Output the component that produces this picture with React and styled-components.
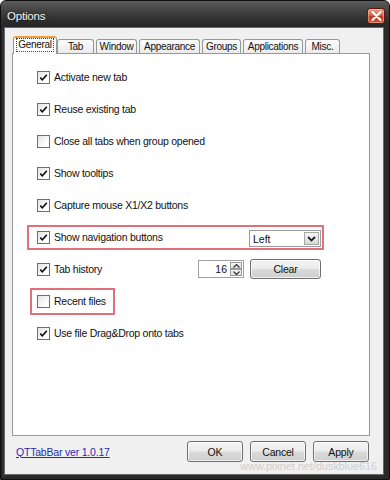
import React from 'react';
import styled, { createGlobalStyle } from 'styled-components';

const Global = createGlobalStyle`
    body {
        margin: 0;
        background: #ffffff;
        font-family: "Liberation Sans", Arial, sans-serif;
    }
`

const tabs = [
    { label: 'General', w: 44, on: true },
    { label: 'Tab', w: 37 },
    { label: 'Window', w: 41 },
    { label: 'Appearance', w: 61 },
    { label: 'Groups', w: 39 },
    { label: 'Applications', w: 60 },
    { label: 'Misc.', w: 35 },
];

const Check = ({ on }) => (
    <Box>
        {on && (
            <svg width="11" height="11" viewBox="0 0 11 11">
                <path d="M2.2 5.6 L4.4 7.8 L8.8 2.8" fill="none" stroke="#111" strokeWidth="1.6" />
            </svg>
        )}
    </Box>
);

const Option = ({ on, text }) => (
    <Row>
        <Line>
            <Check on={on} />
            <Label>{text}</Label>
        </Line>
    </Row>
);

class App extends React.Component {
    render() {
        return (
            <Frame>
                <Global />
                <TitleBar>
                    <Title>Options</Title>
                    <Close>
                        <svg width="11" height="10" viewBox="0 0 11 10">
                            <path d="M1.5 1 L9.5 9 M9.5 1 L1.5 9" stroke="#fff" strokeWidth="2.2" strokeLinecap="round" />
                        </svg>
                    </Close>
                </TitleBar>
                <Client>
                    <TabStrip>
                        {tabs.map(t => (
                            <TabItem key={t.label} $on={t.on} $w={t.w}>
                                {t.on ? <Focus>{t.label}</Focus> : t.label}
                            </TabItem>
                        ))}
                    </TabStrip>
                    <Panel>
                        <Option on text="Activate new tab" />
                        <Option on text="Reuse existing tab" />
                        <Option text="Close all tabs when group opened" />
                        <Option on text="Show tooltips" />
                        <Option on text="Capture mouse X1/X2 buttons" />
                        <Row>
                            <Line $mark $w={297} $h={25}>
                                <Check on />
                                <Label>Show navigation buttons</Label>
                                <Select>
                                    <SelectText>Left</SelectText>
                                    <SelectArrow>
                                        <svg width="9" height="6" viewBox="0 0 9 6">
                                            <path d="M1 1 L4.5 4.5 L8 1" fill="none" stroke="#222" strokeWidth="1.8" />
                                        </svg>
                                    </SelectArrow>
                                </Select>
                            </Line>
                        </Row>
                        <Row>
                            <Line $w={297}>
                                <Check on />
                                <Label>Tab history</Label>
                                <Spin>
                                    <SpinValue>16</SpinValue>
                                    <SpinButtons>
                                        <SpinBtn>
                                            <svg width="7" height="4" viewBox="0 0 7 4"><path d="M0.5 3.5 L3.5 0.5 L6.5 3.5" fill="none" stroke="#333" strokeWidth="1.2" /></svg>
                                        </SpinBtn>
                                        <SpinBtn>
                                            <svg width="7" height="4" viewBox="0 0 7 4"><path d="M0.5 0.5 L3.5 3.5 L6.5 0.5" fill="none" stroke="#333" strokeWidth="1.2" /></svg>
                                        </SpinBtn>
                                    </SpinButtons>
                                </Spin>
                                <Button $w={71} $h={20}>Clear</Button>
                            </Line>
                        </Row>
                        <Row>
                            <Line $mark $w={85} $h={27} $shift={3}>
                                <Check />
                                <Label>Recent files</Label>
                            </Line>
                        </Row>
                        <Option on text="Use file Drag&Drop onto tabs" />
                    </Panel>
                    <Footer>
                        <VersionLink href="#">QTTabBar ver 1.0.17</VersionLink>
                        <ButtonBar>
                            <Button $w={56} $h={21}>OK</Button>
                            <Button $w={56} $h={21}>Cancel</Button>
                            <Button $w={56} $h={21}>Apply</Button>
                        </ButtonBar>
                    </Footer>
                </Client>
                <Watermark>www.pixnet.net/duskblue616</Watermark>
            </Frame>
        );
    }
}

const Frame = styled.div`
    position: relative;
    width: 390px;
    height: 480px;
    box-sizing: border-box;
    display: flex;
    flex-direction: column;
    background: linear-gradient(to right, #1e1e1e, #333 2px, #2a2a2a 4px);
    border: 1px solid #101010;
    border-radius: 6px 6px 0 0;
    overflow: hidden;
`
const TitleBar = styled.div`
    height: 26px;
    flex: none;
    display: flex;
    align-items: center;
    padding: 4px 4px 0 6px;
    box-sizing: border-box;
    background: linear-gradient(to bottom, #5c5c5c 0%, #414141 40%, #2e2e2e 75%, #262626 100%);
`
const Title = styled.div`
    color: #f4f4f4;
    font-size: 11.5px;
    letter-spacing: -0.2px;
    text-shadow: 0 0 3px rgba(0, 0, 0, 0.6);
`
const Close = styled.div`
    margin-left: auto;
    width: 18px;
    height: 16px;
    border-radius: 3px;
    border: 1px solid #5a1c12;
    box-sizing: border-box;
    display: flex;
    align-items: center;
    justify-content: center;
    background: linear-gradient(to bottom, #ef9a84 0%, #d9624a 45%, #c0391f 55%, #d5543a 100%);
    box-shadow: inset 0 0 0 1px rgba(255, 200, 180, 0.5);
`
const Client = styled.div`
    flex: 1;
    margin: 0 5px 4px 3px;
    border: 1px solid #6a6a6a;
    background: #f0f0f0;
    padding: 8px 13px 0 7px;
    display: flex;
    flex-direction: column;
`
const TabStrip = styled.div`
    height: 17px;
    display: flex;
    align-items: flex-end;
    padding-left: 1px;
    position: relative;
    z-index: 1;
`
const TabItem = styled.div`
    width: ${p => p.$w}px;
    height: ${p => (p.$on ? 18 : 14)}px;
    margin-bottom: ${p => (p.$on ? -1 : 0)}px;
    margin-left: ${p => (p.$on ? 0 : 2)}px;
    &:nth-child(2) { margin-left: 0; }
    box-sizing: border-box;
    border: 1px solid #919b9c;
    border-bottom: none;
    border-top: ${p => (p.$on ? '2px solid #f0a03a' : '1px solid #919b9c')};
    border-radius: 3px 3px 0 0;
    background: ${p => (p.$on ? '#ffffff' : 'linear-gradient(to bottom, #fcfcfc, #ebebeb)')};
    font-size: 10px;
    letter-spacing: -0.3px;
    color: #111;
    display: flex;
    align-items: center;
    justify-content: center;
    padding-bottom: ${p => (p.$on ? 2 : 0)}px;
`
const Focus = styled.span`
    border: 1px dotted #444;
    padding: 0 1px;
    line-height: 12px;
`
const Panel = styled.div`
    height: 383px;
    box-sizing: border-box;
    border: 1px solid #919b9c;
    background: #ffffff;
    padding-top: 7px;
    display: flex;
    flex-direction: column;
`
const Row = styled.div`
    height: 32px;
    flex: none;
    display: flex;
    align-items: center;
`
const Line = styled.div`
    display: flex;
    align-items: center;
    box-sizing: border-box;
    margin-left: ${p => 14 + (p.$shift || 0)}px;
    padding-left: ${p => 8 - (p.$shift || 0)}px;
    padding-right: 1px;
    width: ${p => (p.$w ? `${p.$w}px` : 'auto')};
    height: ${p => p.$h || 25}px;
    border: 2px solid ${p => (p.$mark ? '#e0707a' : 'transparent')};
`
const Box = styled.div`
    width: 13px;
    height: 13px;
    flex: none;
    box-sizing: border-box;
    border: 1px solid #6f6f6f;
    background: linear-gradient(135deg, #e2e2e2, #ffffff 70%);
    display: flex;
    align-items: center;
    justify-content: center;
`
const Label = styled.span`
    margin-left: 4px;
    font-size: 10.5px;
    letter-spacing: -0.25px;
    color: #111;
    white-space: nowrap;
`
const Select = styled.div`
    margin-left: auto;
    margin-top: 3px;
    width: 72px;
    height: 17px;
    box-sizing: border-box;
    border: 1px solid #9c9c9c;
    background: #fff;
    display: flex;
    align-items: center;
    padding: 1px;
`
const SelectText = styled.span`
    flex: 1;
    padding-left: 2px;
    font-size: 10.5px;
    color: #111;
`
const SelectArrow = styled.div`
    width: 15px;
    height: 13px;
    box-sizing: border-box;
    border: 1px solid #a8a8a8;
    background: linear-gradient(to bottom, #f6f6f6, #d9d9d9);
    display: flex;
    align-items: center;
    justify-content: center;
`
const Spin = styled.div`
    margin-left: auto;
    width: 46px;
    height: 18px;
    box-sizing: border-box;
    border: 1px solid #a0a0a0;
    background: #fff;
    display: flex;
    align-items: center;
    padding: 1px;
`
const SpinValue = styled.span`
    flex: 1;
    text-align: right;
    padding-right: 3px;
    font-size: 10.5px;
    color: #111;
`
const SpinButtons = styled.div`
    display: flex;
    flex-direction: column;
    height: 14px;
`
const SpinBtn = styled.div`
    width: 12px;
    height: 7px;
    box-sizing: border-box;
    border: 1px solid #9a9a9a;
    background: linear-gradient(to bottom, #f8f8f8, #dedede);
    display: flex;
    align-items: center;
    justify-content: center;
`
const Button = styled.div`
    width: ${p => p.$w}px;
    height: ${p => p.$h}px;
    margin-left: 6px;
    box-sizing: border-box;
    border: 1px solid #707070;
    border-radius: 3px;
    background: linear-gradient(to bottom, #f4f4f4 0%, #ebebeb 48%, #dadada 52%, #cfcfcf 100%);
    box-shadow: inset 0 0 0 1px rgba(255, 255, 255, 0.7);
    display: flex;
    align-items: center;
    justify-content: center;
    font-size: 10.5px;
    letter-spacing: -0.2px;
    color: #111;
`
const Footer = styled.div`
    margin-top: 5px;
    height: 21px;
    display: flex;
    align-items: center;
`
const VersionLink = styled.a`
    margin-left: 4px;
    font-size: 10.5px;
    letter-spacing: -0.2px;
    color: #2b2bb0;
    text-decoration: underline;
`
const ButtonBar = styled.div`
    margin-left: auto;
    margin-right: 1px;
    display: flex;
    gap: 1px;
`
const Watermark = styled.div`
    position: absolute;
    right: 12px;
    bottom: 7px;
    font-size: 11px;
    color: #cfcfcf;
    letter-spacing: -0.1px;
`

export default App;
